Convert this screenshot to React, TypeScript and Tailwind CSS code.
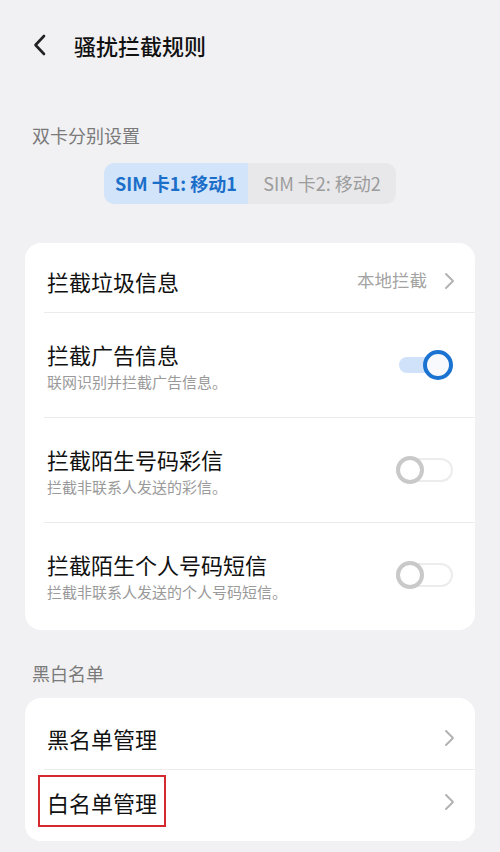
import React from "react";

const font = { fontFamily: '"Noto Sans CJK SC", "Noto Sans", sans-serif' };

function Chevron() {
  return (
    <svg width="11" height="18" viewBox="0 0 11 18" fill="none">
      <path d="M2 2l7 7-7 7" stroke="#b3b3b3" strokeWidth="2" strokeLinecap="round" strokeLinejoin="round" />
    </svg>
  );
}

function ToggleOn() {
  return (
    <div className="relative w-[56px] h-[30px] flex items-center">
      <div className="absolute left-[2px] right-[14px] h-[16px] rounded-full bg-[#cfe2fa]" />
      <div className="absolute right-0 w-[30px] h-[30px] rounded-full border-[4px] border-[#1a73d1] bg-[#f7f9fc]" />
    </div>
  );
}

function ToggleOff() {
  return (
    <div className="relative w-[57px] h-[30px] flex items-center">
      <div className="absolute left-0 right-0 h-[24px] rounded-full border-[2px] border-[#ececec] bg-white" />
      <div className="absolute left-0 w-[28px] h-[28px] rounded-full border-[4px] border-[#c9c9c9] bg-white" />
    </div>
  );
}

function Divider() {
  return <div className="ml-[19px] h-px bg-[#ececec]" />;
}

function SwitchRow({ title, sub, on }: { title: string; sub: string; on: boolean }) {
  return (
    <div className="h-[104px] flex items-center pl-[22px] pr-[22px]">
      <div className="flex-1 flex flex-col">
        <div className="text-[22px] leading-[30px] text-[#111]">{title}</div>
        <div className="mt-[3px] text-[15px] leading-[20px] text-[#9a9a9a]">{sub}</div>
      </div>
      {on ? <ToggleOn /> : <ToggleOff />}
    </div>
  );
}

export default function App() {
  return (
    <div className="w-[500px] h-[852px] bg-[#f1f1f3] overflow-hidden" style={font}>
      <div className="h-[90px] flex items-center pl-[33px]">
        <svg width="14" height="22" viewBox="0 0 14 22" fill="none">
          <path d="M11 2L2.5 11 11 20" stroke="#222" strokeWidth="2.6" strokeLinecap="round" strokeLinejoin="round" />
        </svg>
        <div className="ml-[27px] text-[22px] leading-[30px] font-medium text-[#111]">骚扰拦截规则</div>
      </div>

      <div className="pl-[32px] pt-[33px] text-[18px] leading-[24px] text-[#7a7a7a]">双卡分别设置</div>

      <div className="flex justify-center mt-[16px]">
        <div className="flex rounded-[10px] overflow-hidden h-[41px]">
          <div className="w-[144px] bg-[#d2e4fa] flex items-center justify-center text-[18px] font-bold text-[#1b6fc9]">
            SIM 卡1: 移动1
          </div>
          <div className="w-[148px] bg-[#e8e8ea] flex items-center justify-center text-[18px] text-[#9c9c9c]">
            SIM 卡2: 移动2
          </div>
        </div>
      </div>

      <div className="mx-[25px] mt-[39px] bg-white rounded-[16px] pt-[6px] pb-[3px]">
        <div className="h-[63px] flex items-center pl-[22px] pr-[20px]">
          <div className="flex-1 text-[22px] leading-[30px] text-[#111]">拦截垃圾信息</div>
          <div className="text-[17.5px] text-[#a3a3a3] mr-[17px]">本地拦截</div>
          <Chevron />
        </div>
        <Divider />
        <SwitchRow title="拦截广告信息" sub="联网识别并拦截广告信息。" on={true} />
        <Divider />
        <SwitchRow title="拦截陌生号码彩信" sub="拦截非联系人发送的彩信。" on={false} />
        <Divider />
        <SwitchRow title="拦截陌生个人号码短信" sub="拦截非联系人发送的个人号码短信。" on={false} />
      </div>

      <div className="pl-[32px] pt-[31px] text-[18px] leading-[24px] text-[#7a7a7a]">黑白名单</div>

      <div className="mx-[25px] mt-[13px] bg-white rounded-[16px] pt-[8px] pb-[7px]">
        <div className="h-[63px] flex items-center pl-[22px] pr-[20px]">
          <div className="flex-1 text-[22px] leading-[30px] text-[#111]">黑名单管理</div>
          <Chevron />
        </div>
        <Divider />
        <div className="h-[64px] flex items-center pl-[22px] pr-[20px]">
          <div className="flex-1">
            <span className="relative inline-block text-[22px] leading-[30px] text-[#111]">
              白名单管理
              <span className="absolute left-[-9px] right-[-9px] top-[-12px] bottom-[-10px] border-[2px] border-[#d42a2f]" />
            </span>
          </div>
          <Chevron />
        </div>
      </div>
    </div>
  );
}
